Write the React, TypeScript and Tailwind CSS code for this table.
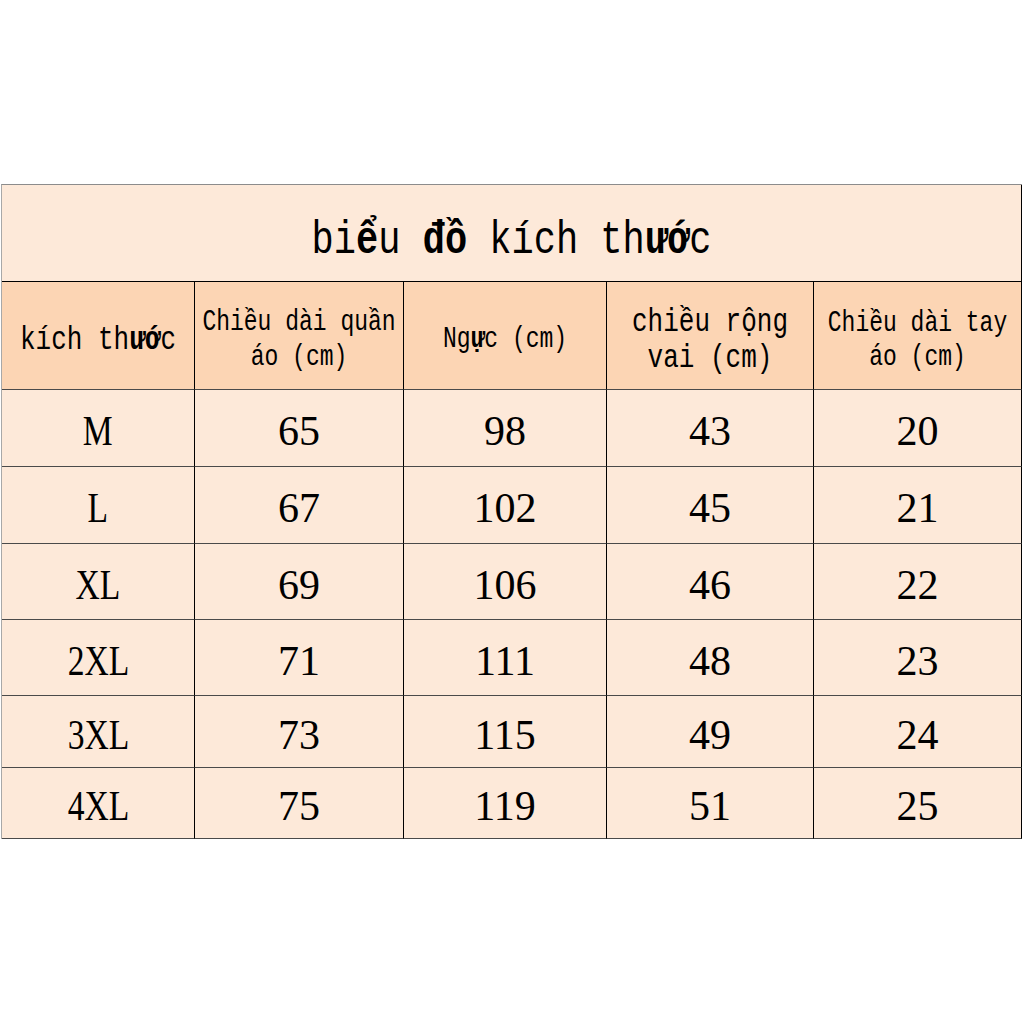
import type { ReactNode } from 'react';

const rows = [
  { size: 'M', len: '65', chest: '98', shoulder: '43', sleeve: '20', h: 'h-[77px]' },
  { size: 'L', len: '67', chest: '102', shoulder: '45', sleeve: '21', h: 'h-[77px]' },
  { size: 'XL', len: '69', chest: '106', shoulder: '46', sleeve: '22', h: 'h-[76px]' },
  { size: '2XL', len: '71', chest: '111', shoulder: '48', sleeve: '23', h: 'h-[76px]' },
  { size: '3XL', len: '73', chest: '115', shoulder: '49', sleeve: '24', h: 'h-[72px]' },
  { size: '4XL', len: '75', chest: '119', shoulder: '51', sleeve: '25', h: 'h-[71px]' },
];

const mono = "font-['Liberation_Mono',monospace]";
const serif = "font-['Liberation_Serif',serif]";

function HeadCell({ children }: { children: ReactNode }) {
  return (
    <div className="flex h-[108px] items-center justify-center border-r border-b border-r-black border-b-[#4a4a4a] bg-[#fcd5b4] pt-[8px] text-center text-black">
      {children}
    </div>
  );
}

function DataCell({ children, h, label }: { children: ReactNode; h: string; label?: boolean }) {
  return (
    <div
      className={`flex ${h} items-center justify-center border-r border-b border-r-black border-b-[#4a4a4a] bg-[#fde9d9] pt-[6px] text-[42px] leading-none text-black ${serif}`}
    >
      <span className={label ? 'inline-block scale-x-[0.8]' : 'inline-block'}>{children}</span>
    </div>
  );
}

export default function App() {
  return (
    <div className="min-h-[1024px] w-[1024px] bg-white pt-[184px] pl-[1px]">
      <div className="grid w-[1021px] grid-cols-[193px_209px_203px_207px_208px] border-t border-l border-t-[#8c8c8c] border-l-[#a8a8a8]">
        {/* title */}
        <div className="col-span-5 flex h-[97px] items-center justify-center border-r border-b border-r-black border-b-black bg-[#fde9d9] pt-[16px]">
          <div className={`scale-y-[1.25] text-[37px] leading-none text-black ${mono}`}>
            bi<b>ể</b>u <b>đồ</b> kích th<b>ướ</b>c
          </div>
        </div>

        {/* header */}
        <HeadCell>
          <div className={`scale-y-[1.3] text-[26px] leading-none ${mono}`}>
            kích th<b>ướ</b>c
          </div>
        </HeadCell>
        <HeadCell>
          <div className={`scale-y-[1.3] text-[23px] leading-[27px] ${mono}`}>
            Chiều dài quần
            <br />
            áo (cm)
          </div>
        </HeadCell>
        <HeadCell>
          <div className={`scale-y-[1.3] text-[23px] leading-none ${mono}`}>
            Ng<b>ự</b>c (cm)
          </div>
        </HeadCell>
        <HeadCell>
          <div className={`scale-y-[1.3] text-[26px] leading-[28px] ${mono}`}>
            chiều rộng
            <br />
            vai (cm)
          </div>
        </HeadCell>
        <HeadCell>
          <div className={`scale-y-[1.3] text-[23px] leading-[26px] ${mono}`}>
            Chiều dài tay
            <br />
            áo (cm)
          </div>
        </HeadCell>

        {/* rows */}
        {rows.map((r) => (
          <div key={r.size} className="contents">
            <DataCell h={r.h} label>
              {r.size}
            </DataCell>
            <DataCell h={r.h}>{r.len}</DataCell>
            <DataCell h={r.h}>{r.chest}</DataCell>
            <DataCell h={r.h}>{r.shoulder}</DataCell>
            <DataCell h={r.h}>{r.sleeve}</DataCell>
          </div>
        ))}
      </div>
    </div>
  );
}
